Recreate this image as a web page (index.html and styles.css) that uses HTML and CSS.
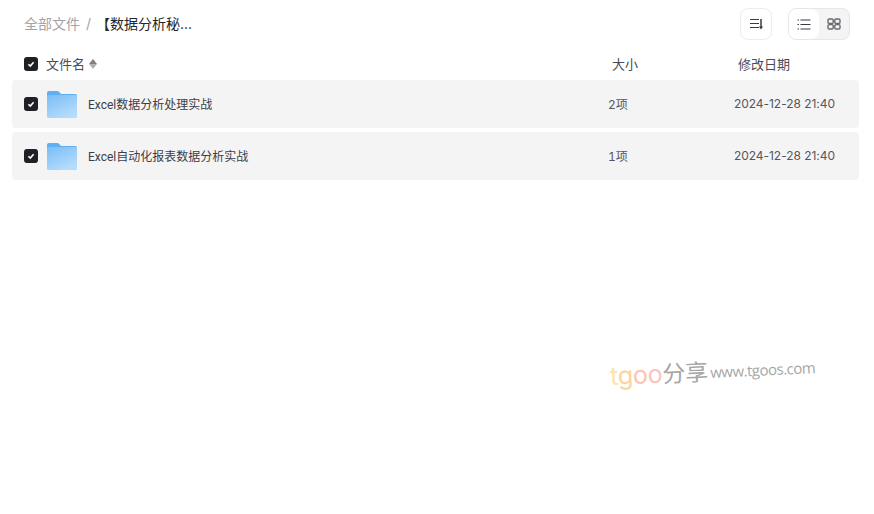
FILE: index.html
```html
<!DOCTYPE html>
<html lang="zh-CN">
  <head>
    <meta charset="UTF-8" />
    <title>全部文件</title>
    <link rel="stylesheet" href="styles.css">
  </head>
  <body>
    <div class="page">
      <!-- Toolbar -->
      <div class="toolbar">
        <div class="breadcrumb">
          <span class="crumb-root">全部文件</span>
          <span class="crumb-sep">/</span>
          <span class="crumb-current">【数据分析秘...</span>
        </div>
        <div class="tools">
          <button class="tool-btn">
            <svg width="14" height="12" viewBox="0 0 14 12" fill="none" stroke="#3a3b42" stroke-width="1.2">
              <path d="M1 1.5H10M1 5.5H10M1 9.5H10" />
              <path d="M12 1v8" stroke-width="1.5" />
              <path d="M10 8.4L12 11.6l2-3.2z" fill="#3a3b42" stroke="none" />
            </svg>
          </button>
          <div class="view-switch">
            <div class="view-item active">
              <svg width="14" height="11" viewBox="0 0 14 11" fill="none" stroke="#3a3b42" stroke-width="1.2">
                <path d="M3.5 1H13.5M3.5 5.5H13.5M3.5 10H13.5" />
                <path d="M0.5 1H2M0.5 5.5H2M0.5 10H2" />
              </svg>
            </div>
            <div class="view-item">
              <svg width="14" height="12" viewBox="0 0 14 12" fill="none" stroke="#68696e" stroke-width="1.4">
                <rect x="1" y="1" width="5.2" height="4.4" rx="1.2" />
                <rect x="7.8" y="1" width="5.2" height="4.4" rx="1.2" />
                <rect x="1" y="6.6" width="5.2" height="4.4" rx="1.2" />
                <rect x="7.8" y="6.6" width="5.2" height="4.4" rx="1.2" />
              </svg>
            </div>
          </div>
        </div>
      </div>

      <!-- Table head -->
      <div class="list-head">
        <div class="head-name">
          <span class="check"><svg width="10" height="10" viewBox="0 0 10 10"><path d="M2.4 5.2l1.9 1.9 3.3-3.9" fill="none" stroke="#fff" stroke-width="1.6" /></svg></span>
          <span class="head-text">文件名</span>
          <span class="sort-arrows"><i class="arrow-up"></i><i class="arrow-down"></i></span>
        </div>
        <div class="head-text">大小</div>
        <div class="head-text">修改日期</div>
      </div>

      <!-- Rows -->
      <div class="list">
        <div class="row">
          <span class="check"><svg width="10" height="10" viewBox="0 0 10 10"><path d="M2.4 5.2l1.9 1.9 3.3-3.9" fill="none" stroke="#fff" stroke-width="1.6" /></svg></span>
          <svg class="folder" width="30" height="27" viewBox="0 0 30 27">
            <defs>
              <linearGradient id="folderFill" x1="0" y1="0" x2="0.6" y2="1">
                <stop offset="0" stop-color="#79bdf6" />
                <stop offset="1" stop-color="#b5dcfc" />
              </linearGradient>
            </defs>
            <path d="M0 2a2 2 0 0 1 2-2h8.5a2 2 0 0 1 1.5.7L14 3h14a2 2 0 0 1 2 2v3H0z" fill="#5fb0f2" />
            <rect x="0" y="4" width="30" height="23" rx="1.5" fill="url(#folderFill)" />
          </svg>
          <span class="row-name">Excel数据分析处理实战</span>
          <span class="row-size">2项</span>
          <span class="row-date">2024-12-28 21:40</span>
        </div>
        <div class="row">
          <span class="check"><svg width="10" height="10" viewBox="0 0 10 10"><path d="M2.4 5.2l1.9 1.9 3.3-3.9" fill="none" stroke="#fff" stroke-width="1.6" /></svg></span>
          <svg class="folder" width="30" height="27" viewBox="0 0 30 27">
            <path d="M0 2a2 2 0 0 1 2-2h8.5a2 2 0 0 1 1.5.7L14 3h14a2 2 0 0 1 2 2v3H0z" fill="#5fb0f2" />
            <rect x="0" y="4" width="30" height="23" rx="1.5" fill="url(#folderFill)" />
          </svg>
          <span class="row-name">Excel自动化报表数据分析实战</span>
          <span class="row-size">1项</span>
          <span class="row-date">2024-12-28 21:40</span>
        </div>
      </div>
    </div>

    <!-- Watermark -->
    <div class="watermark">
      <span class="wm-brand"><span class="wm-t">t</span><span class="wm-g">g</span><span class="wm-o1">o</span><span class="wm-o2">o</span></span><span class="wm-cn">分享</span>
      <span class="wm-url">www.tgoos.com</span>
    </div>
  </body>
</html>
```

FILE: styles.css
```css
* {
  margin: 0;
  padding: 0;
  box-sizing: border-box;
  font-family: "Inter", "Noto Sans CJK SC", sans-serif;
}

body {
  background-color: #ffffff;
  color: #3a3b45;
}

.page {
  width: 874px;
  padding: 8px 15px 0 12px;
}

/* Toolbar */
.toolbar {
  display: flex;
  align-items: center;
  justify-content: space-between;
  height: 32px;
  padding: 0 9px 0 12px;
}

.breadcrumb {
  display: flex;
  align-items: center;
  padding-bottom: 2px;
  font-size: 14px;
}

.crumb-root {
  color: #a3a3a6;
}

.crumb-sep {
  color: #a3a3a6;
  margin: 0 5px 0 6px;
}

.crumb-current {
  color: #25262b;
}

.tools {
  display: flex;
  gap: 16px;
}

.tool-btn {
  display: flex;
  align-items: center;
  justify-content: center;
  width: 32px;
  height: 32px;
  background: #fff;
  border: 1px solid #ececee;
  border-radius: 8px;
}

.view-switch {
  display: flex;
  width: 62px;
  height: 32px;
  background: #f4f4f5;
  border: 1px solid #e6e6e8;
  border-radius: 8px;
  overflow: hidden;
}

.view-item {
  display: flex;
  align-items: center;
  justify-content: center;
  width: 30px;
}

.view-item.active {
  background: #fff;
  border-radius: 0 8px 8px 0;
}

/* List head */
.list-head {
  display: grid;
  grid-template-columns: 600px 126px 1fr;
  align-items: center;
  height: 40px;
  padding-top: 8px;
  font-size: 13px;
  color: #4a4b55;
}

.head-text {
  padding-bottom: 2px;
}

.head-name {
  display: flex;
  align-items: center;
  padding-left: 12px;
}

.head-name .check {
  margin-right: 8px;
}

.sort-arrows {
  display: flex;
  flex-direction: column;
  margin-left: 4px;
}

.arrow-up {
  border: 4px solid transparent;
  border-top: 0;
  border-bottom: 5px solid #7f7f83;
}

.arrow-down {
  border: 4px solid transparent;
  border-bottom: 0;
  border-top: 5px solid #b0b0b2;
}

.check {
  display: flex;
  align-items: center;
  justify-content: center;
  flex-shrink: 0;
  width: 14px;
  height: 14px;
  background: #1f2026;
  border-radius: 3px;
}

/* Rows */
.list {
  display: flex;
  flex-direction: column;
  gap: 4px;
}

.row {
  display: flex;
  align-items: center;
  height: 48px;
  padding-left: 12px;
  background: #f4f4f4;
  border-radius: 4px;
  font-size: 12px;
  color: #3c3d48;
}

.folder {
  margin-left: 9px;
  flex-shrink: 0;
}

.row-name {
  width: 520px;
  margin-left: 11px;
  padding-bottom: 2px;
  font-family: "Roboto", "Noto Sans CJK SC", sans-serif;
}

.row-size {
  width: 126px;
  padding-bottom: 2px;
  color: #55565e;
  font-variant-numeric: tabular-nums;
}

.row-date {
  padding-bottom: 2px;
  color: #55565e;
  letter-spacing: -0.05px;
}

/* Watermark */
.watermark {
  position: absolute;
  left: 610px;
  top: 353px;
  display: flex;
  align-items: baseline;
  transform: rotate(-2.8deg);
  white-space: nowrap;
}

.wm-brand {
  font-family: "Open Sans", sans-serif;
  font-size: 25px;
  letter-spacing: -0.3px;
}

.wm-t { color: #fde3a6; }
.wm-g { color: #fdd29c; }
.wm-o1 { color: #fdc4b0; }
.wm-o2 { color: #fbc3c0; }

.wm-cn {
  font-family: "Noto Sans CJK SC", sans-serif;
  font-size: 23px;
  color: #a6a6a6;
}

.wm-url {
  font-family: "Open Sans", sans-serif;
  font-size: 15px;
  color: #a6a6a6;
  margin-left: 2px;
  letter-spacing: -0.5px;
  transform: translateY(-2px);
}
```
